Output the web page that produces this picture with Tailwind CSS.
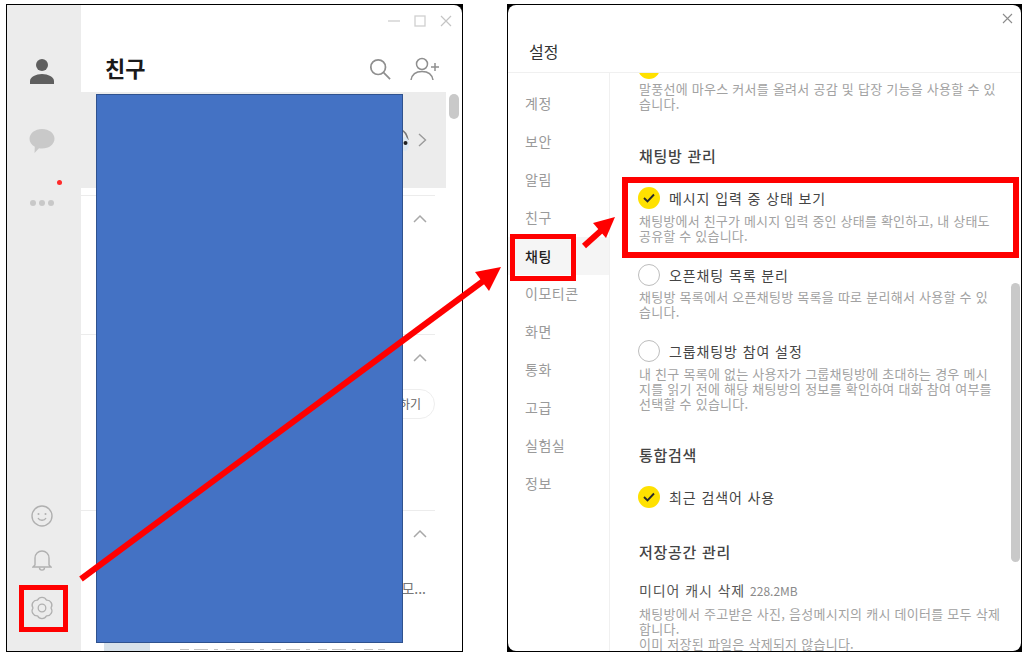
<!DOCTYPE html>
<html lang="ko">
<head>
<meta charset="utf-8">
<script src="https://cdn.jsdelivr.net/npm/@tailwindcss/browser@4"></script>
</head>
<body class="bg-white">
<div class="relative w-[1024px] h-[653px] overflow-hidden font-['Noto_Sans_CJK_KR','Noto_Sans',sans-serif] flex items-start pl-[6px] pt-[4px]">

  <!-- left window -->
  <div class="w-[457px] h-[648px] bg-black p-px shrink-0">
    <div class="w-full h-full bg-white rounded-tr-lg flex overflow-hidden">
      <aside class="w-[74px] h-full bg-[#ececec] flex flex-col items-start pl-[22px] shrink-0">
        <svg class="mt-[53px]" width="26" height="26" viewBox="0 0 26 26"><circle cx="13" cy="7" r="6" fill="#5f5f5f"/><path d="M1 26v-3c0-4 6-7 12-7s12 3 12 7v3z" fill="#5f5f5f"/></svg>
        <svg class="mt-[45px]" width="26" height="25" viewBox="0 0 26 25"><path d="M13 0c7 0 12.500 4.300 12.500 9.800S20 19.600 13 19.600c-1 0-2 0-3-.3L5.500 24l.3-6.300C2.500 16 .5 13.200.5 9.800.5 4.300 6 0 13 0z" fill="#c9c9c9"/></svg>
        <div class="relative ml-px mt-[46px] flex gap-[3.500px]">
          <span class="absolute left-[27px] top-[-20px] size-[5px] rounded-full bg-[#ff2a2a]"></span>
          <span class="size-[5.500px] rounded-full bg-[#c8c8c8]"></span>
          <span class="size-[5.500px] rounded-full bg-[#c8c8c8]"></span>
          <span class="size-[5.500px] rounded-full bg-[#c8c8c8]"></span>
        </div>
        <svg class="mt-auto ml-px" width="24" height="24" viewBox="0 0 24 24" fill="none" stroke="#b0b0b0" stroke-width="1.400"><circle cx="12" cy="12" r="10"/><circle cx="8.500" cy="10" r="1" fill="#b0b0b0" stroke="none"/><circle cx="15.500" cy="10" r="1" fill="#b0b0b0" stroke="none"/><path d="M8 14c1.500 3 6.500 3 8 0"/></svg>
        <svg class="mt-[20px] ml-[3px]" width="20" height="24" viewBox="0 0 20 24" fill="none" stroke="#b0b0b0" stroke-width="1.400"><path d="M3 17V10a7 7 0 0 1 14 0v7l2 2H1z"/><path d="M7.500 19.500c0 3.500 5 3.500 5 0"/></svg>
        <svg class="mt-[24px] mb-[31px] ml-px" width="24" height="24" viewBox="0 0 24 24" fill="none" stroke="#b0b0b0" stroke-width="1.300" stroke-linejoin="round"><circle cx="12" cy="12" r="3.800"/><path d="M7.500 4.200A5 5 0 0 1 16.500 4.200A5 5 0 0 1 21 12A5 5 0 0 1 16.500 19.800A5 5 0 0 1 7.500 19.800A5 5 0 0 1 3 12A5 5 0 0 1 7.500 4.200z"/></svg>
      </aside>
      <main class="flex-1 min-w-0 flex flex-col">
        <div class="h-[87px] shrink-0 flex flex-col">
          <div class="h-[46px] shrink-0 flex items-start justify-end gap-[12px] pt-[9px] pr-[9px]">
            <svg width="14" height="14" viewBox="0 0 14 14" fill="none" stroke="#d4d4d4" stroke-width="1.300"><path d="M1 7h12"/></svg>
            <svg width="14" height="14" viewBox="0 0 14 14" fill="none" stroke="#d0d0d0" stroke-width="1.300"><rect x="2" y="2" width="10" height="10"/></svg>
            <svg width="14" height="14" viewBox="0 0 14 14" fill="none" stroke="#c4c4c4" stroke-width="1.200"><path d="M2 2l10 10M12 2L2 12"/></svg>
          </div>
          <div class="flex items-center pl-[24px] pr-[22px] h-[36px]">
            <h1 class="mb-[4px] text-[22px] leading-[30px] font-bold text-[#1a1a1a]">친구</h1>
            <svg class="ml-auto" width="22" height="22" viewBox="0 0 24 24" fill="none" stroke="#8f8f8f" stroke-width="1.900"><circle cx="10" cy="10" r="8"/><path d="M16 16l7 7"/></svg>
            <svg class="ml-[19px]" width="30" height="24" viewBox="0 0 30 24" fill="none" stroke="#8f8f8f" stroke-width="1.500"><circle cx="12" cy="7" r="5.500"/><path d="M1 23c1-6 5-8.500 11-8.500s10 2.500 11 8.500"/><path d="M21 10h8M25 6v8"/></svg>
          </div>
        </div>
        <div class="flex flex-1 min-h-0">
          <div class="w-[365px] shrink-0 flex flex-col">
            <div class="h-[96px] bg-[#ececec] flex items-center justify-end pr-[19px] shrink-0">
              <svg class="mr-[9px]" width="10" height="24" viewBox="0 0 10 24"><path d="M2 2c4 1 6 5 7 10" fill="none" stroke="#777" stroke-width="1.500"/><ellipse cx="6" cy="16" rx="4" ry="7" fill="#dce8f2"/><circle cx="6.500" cy="15" r="2" fill="#222"/></svg>
              <svg width="9" height="14" viewBox="0 0 9 14" fill="none" stroke="#9a9a9a" stroke-width="1.400"><path d="M1 1l6.500 6L1 13"/></svg>
            </div>
            <div class="h-[139px] mt-[7px] mr-[11px] border-t border-[#ececec] pt-[18px] flex justify-end pr-[8px] shrink-0">
              <svg width="14" height="9" viewBox="0 0 14 9" fill="none" stroke="#a8a8a8" stroke-width="1.500"><path d="M1 8l6-6 6 6"/></svg>
            </div>
            <div class="h-[176px] mr-[11px] border-t border-[#ececec] pt-[18px] flex flex-col items-end shrink-0">
              <svg class="mr-[8px]" width="14" height="9" viewBox="0 0 14 9" fill="none" stroke="#a8a8a8" stroke-width="1.500"><path d="M1 8l6-6 6 6"/></svg>
              <span class="mt-[27px] h-[30px] px-[13px] rounded-full border border-[#eeeeee] text-[12px] leading-[28px] text-[#666]">친구 추가하기</span>
            </div>
            <div class="mr-[11px] border-t border-[#ececec] pt-[18px] flex flex-col items-end">
              <svg class="mr-[8px]" width="14" height="9" viewBox="0 0 14 9" fill="none" stroke="#a8a8a8" stroke-width="1.500"><path d="M1 8l6-6 6 6"/></svg>
              <span class="mt-[41px] text-[14px] leading-[18px] text-[#777] pr-[9px]">모...</span>
            </div>
          </div>
          <div class="w-[10px] ml-[3px] pt-[2px] shrink-0">
            <div class="h-[25px] rounded-full bg-[#c9c9c9]"></div>
          </div>
        </div>
      </main>
    </div>
  </div>

  <!-- right window -->
  <div class="ml-[44px] w-[515px] h-[648px] bg-black p-px shrink-0">
    <div class="relative w-full h-full bg-white rounded-lg flex flex-col overflow-hidden">
      <header class="h-[68px] shrink-0 border-b border-[#f0f0f0] pl-[21px] pt-[35px]">
        <h2 class="text-[16px] leading-[22px] font-normal text-[#333]">설정</h2>
        <svg class="absolute right-[8px] top-[8px]" width="11" height="11" viewBox="0 0 11 11" fill="none" stroke="#8c8c8c" stroke-width="1.100"><path d="M1 1l9 9M10 1l-9 9"/></svg>
      </header>
      <div class="flex flex-1 min-h-0">
        <nav class="w-[102px] shrink-0 border-r border-[#f0f0f0] pt-[11px] text-[14px] leading-[38px] tracking-[0.5px] text-[#9a9a9a]">
          <div class="pl-[17px]">계정</div>
          <div class="pl-[17px]">보안</div>
          <div class="pl-[17px]">알림</div>
          <div class="pl-[17px]">친구</div>
          <div class="pl-[17px] mt-px bg-[#f5f5f5] text-[#1e1e1e] font-medium">채팅</div>
          <div class="pl-[17px] -mt-px">이모티콘</div>
          <div class="pl-[17px]">화면</div>
          <div class="pl-[17px]">통화</div>
          <div class="pl-[17px]">고급</div>
          <div class="pl-[17px]">실험실</div>
          <div class="pl-[17px]">정보</div>
        </nav>
        <div class="relative flex-1 min-w-0 overflow-hidden pl-[29px] pr-[10px] text-[#a2a2a2] text-[13px] leading-[15px] tracking-[0.26px]">
          <div class="-mt-[16px] -ml-px h-[22px] flex items-center">
            <span class="size-[22px] rounded-full bg-[#ffe100] shrink-0"></span>
          </div>
          <p class="mt-[2px] whitespace-nowrap">말풍선에 마우스 커서를 올려서 공감 및 답장 기능을 사용할 수 있<br>습니다.</p>

          <h3 class="mt-[34px] text-[15px] leading-[22px] font-medium text-[#444] tracking-[0.7px]">채팅방 관리</h3>

          <div class="mt-[19px] -ml-px flex items-center gap-[9px] h-[24px] text-[14px] text-[#444] tracking-[0.9px]">
            <span class="size-[22px] rounded-full bg-[#ffe100] flex items-center justify-center shrink-0"><svg width="12" height="10" viewBox="0 0 12 10" fill="none" stroke="#2a2a2a" stroke-width="1.900"><path d="M1 5l3.500 3.500L11 1.500"/></svg></span>메시지 입력 중 상태 보기
          </div>
          <p class="mt-[3px] whitespace-nowrap tracking-[0.2px]">채팅방에서 친구가 메시지 입력 중인 상태를 확인하고, 내 상태도<br>공유할 수 있습니다.</p>

          <div class="mt-[20px] -ml-px flex items-center gap-[9px] h-[24px] text-[14px] text-[#444] tracking-[0.9px]">
            <span class="size-[22px] rounded-full border-[1.500px] border-[#bdbdbd] shrink-0"></span>오픈채팅 목록 분리
          </div>
          <p class="mt-[2px] whitespace-nowrap">채팅방 목록에서 오픈채팅방 목록을 따로 분리해서 사용할 수 있<br>습니다.</p>

          <div class="mt-[20px] -ml-px flex items-center gap-[9px] h-[24px] text-[14px] text-[#444] tracking-[0.9px]">
            <span class="size-[22px] rounded-full border-[1.500px] border-[#bdbdbd] shrink-0"></span>그룹채팅방 참여 설정
          </div>
          <p class="mt-[3px] whitespace-nowrap">내 친구 목록에 없는 사용자가 그룹채팅방에 초대하는 경우 메시<br>지를 읽기 전에 해당 채팅방의 정보를 확인하여 대화 참여 여부를<br>선택할 수 있습니다.</p>

          <h3 class="mt-[33px] text-[15px] leading-[22px] font-medium text-[#444] tracking-[0.7px]">통합검색</h3>

          <div class="mt-[19px] -ml-px flex items-center gap-[9px] h-[24px] text-[14px] text-[#444] tracking-[0.9px]">
            <span class="size-[22px] rounded-full bg-[#ffe100] flex items-center justify-center shrink-0"><svg width="12" height="10" viewBox="0 0 12 10" fill="none" stroke="#2a2a2a" stroke-width="1.900"><path d="M1 5l3.500 3.500L11 1.500"/></svg></span>최근 검색어 사용
          </div>

          <h3 class="mt-[32px] text-[15px] leading-[22px] font-medium text-[#444] tracking-[0.7px]">저장공간 관리</h3>

          <div class="mt-[17px] h-[20px] flex items-baseline gap-[5px] text-[14px] leading-[20px] text-[#555] tracking-[0.9px]">미디어 캐시 삭제 <span class="text-[12px] text-[#8a8a8a] tracking-normal">228.2MB</span></div>
          <p class="mt-[6px] whitespace-nowrap">채팅방에서 주고받은 사진, 음성메시지의 캐시 데이터를 모두 삭제<br>합니다.<br>이미 저장된 파일은 삭제되지 않습니다.</p>

          <div class="absolute right-[1px] top-[210px] w-[9px] h-[279px] rounded-full bg-[#c9c9c9]"></div>
        </div>
      </div>
    </div>
  </div>

  <!-- annotations laid over the screenshot -->
  <div class="absolute left-[104px] top-[642px] w-[46px] h-[9px] bg-[#d8e2ea]"></div>
  <svg class="absolute left-[180px] top-[648px]" width="206" height="3" viewBox="0 0 206 3"><path d="M0 1.500h205" stroke="#c4c4c4" stroke-width="1.200" stroke-dasharray="9 5 14 6 4 8"/></svg>
  <div class="absolute left-[96px] top-[94px] w-[307px] h-[549px] bg-[#4472c4] border border-[#2f528f]"></div>
  <div class="absolute left-[19px] top-[585px] w-[49px] h-[47px] border-[5px] border-[#ff0000]"></div>
  <div class="absolute left-[510px] top-[234px] w-[66px] h-[47px] border-[5.500px] border-[#ff0000]"></div>
  <div class="absolute left-[622px] top-[177px] w-[397px] h-[81px] border-[6px] border-[#ff0000]"></div>
  <svg class="absolute left-0 top-0" width="1024" height="653" viewBox="0 0 1024 653">
    <path d="M81 579L486 279" stroke="#ff0000" stroke-width="6" fill="none"/>
    <path d="M501 267l-12 24-14-19z" fill="#ff0000"/>
    <path d="M584 246L604 228" stroke="#ff0000" stroke-width="6" fill="none"/>
    <path d="M615 217l-9 21-13-15z" fill="#ff0000"/>
  </svg>
</div>
</body>
</html>
